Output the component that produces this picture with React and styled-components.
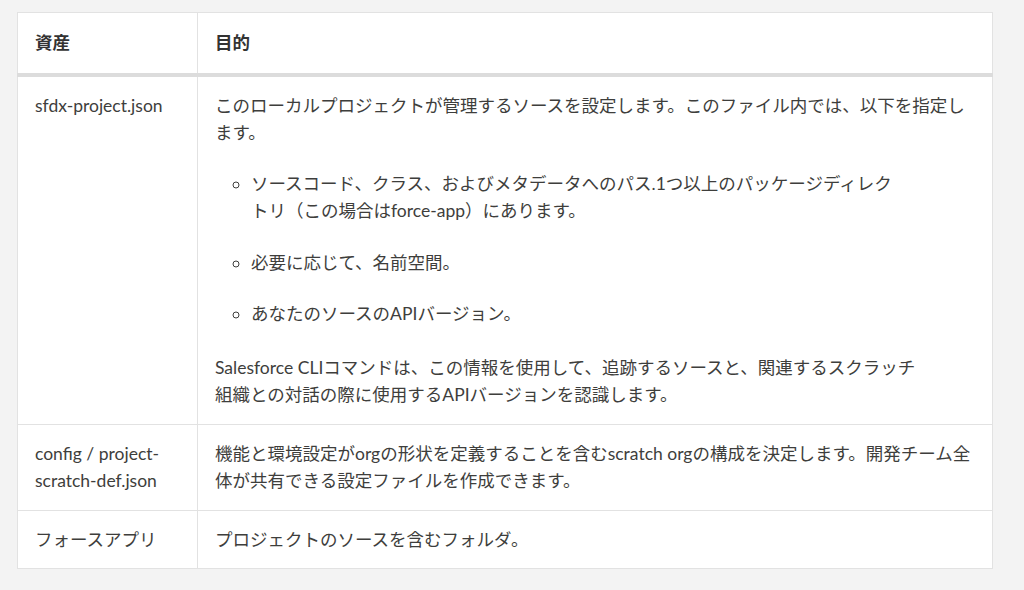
import React from "react";
import styled, { createGlobalStyle } from "styled-components";

const Global = createGlobalStyle`
  html, body { margin: 0; padding: 0; background: #f3f3f3; }
  body {
    font-family: Lato, "Noto Sans CJK JP", sans-serif;
    color: #3e3e3c;
  }
`;

const Page = styled.div`
  padding: 12px 31px 20px 17px;
`;

const Table = styled.table`
  width: 976px;
  border-collapse: collapse;
  background: #fff;
  border: 1px solid #e2e2e2;
  font-size: 17.5px;
  line-height: 27.5px;
  table-layout: fixed;
`;

const HeadCell = styled.th`
  text-align: left;
  font-weight: 700;
  padding: 16px 17px 16px 17px;
  border: 1px solid #e2e2e2;
  border-bottom: 4px solid #dcdcdc;
  width: ${(p) => p.$w || "auto"};
  color: #333;
`;

const Cell = styled.td`
  vertical-align: top;
  padding: 15px 17px 15px 17px;
  border: 1px solid #e2e2e2;
`;

const Para = styled.p`
  margin: 0;
`;

const List = styled.ul`
  list-style: circle;
  margin: 23px 30px 26px 0;
  padding-left: 36px;
`;

const Item = styled.li`
  & + & { margin-top: 24px; }
`;

export default function App() {
  return (
    <Page>
      <Global />
      <Table>
        <thead>
          <tr>
            <HeadCell $w="145px">資産</HeadCell>
            <HeadCell>目的</HeadCell>
          </tr>
        </thead>
        <tbody>
          <tr>
            <Cell>sfdx-project.json</Cell>
            <Cell>
              <Para>このローカルプロジェクトが管理するソースを設定します。このファイル内では、以下を指定します。</Para>
              <List>
                <Item>ソースコード、クラス、およびメタデータへのパス.1つ以上のパッケージディレク<br />トリ（この場合はforce-app）にあります。</Item>
                <Item>必要に応じて、名前空間。</Item>
                <Item>あなたのソースのAPIバージョン。</Item>
              </List>
              <Para>Salesforce CLIコマンドは、この情報を使用して、追跡するソースと、関連するスクラッチ<br />組織との対話の際に使用するAPIバージョンを認識します。</Para>
            </Cell>
          </tr>
          <tr>
            <Cell>config / project-scratch-def.json</Cell>
            <Cell>機能と環境設定がorgの形状を定義することを含むscratch orgの構成を決定します。開発チーム全<br />体が共有できる設定ファイルを作成できます。</Cell>
          </tr>
          <tr>
            <Cell>フォースアプリ</Cell>
            <Cell>プロジェクトのソースを含むフォルダ。</Cell>
          </tr>
        </tbody>
      </Table>
    </Page>
  );
}
